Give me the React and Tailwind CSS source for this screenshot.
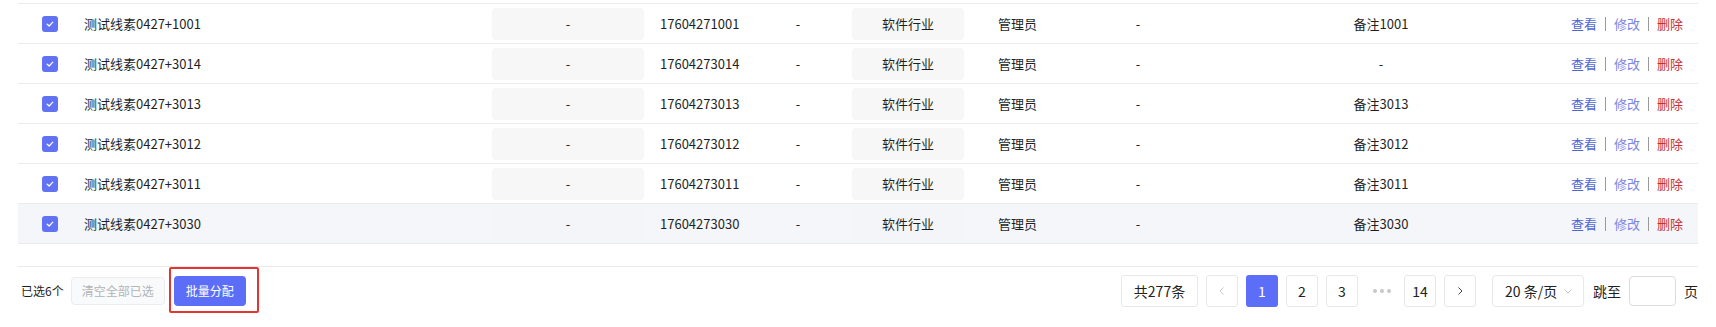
import React from "react";

const rows = [
  { name: "测试线素0427+1001", phone: "17604271001", note: "备注1001" },
  { name: "测试线素0427+3014", phone: "17604273014", note: "-" },
  { name: "测试线素0427+3013", phone: "17604273013", note: "备注3013" },
  { name: "测试线素0427+3012", phone: "17604273012", note: "备注3012" },
  { name: "测试线素0427+3011", phone: "17604273011", note: "备注3011" },
  { name: "测试线素0427+3030", phone: "17604273030", note: "备注3030", hl: true },
];

function Check() {
  return (
    <span className="flex h-[16px] w-[16px] items-center justify-center rounded-[3px] bg-[#6172f3]">
      <svg width="10" height="10" viewBox="0 0 10 10" fill="none">
        <path d="M2.2 5.2 L4.2 7 L7.8 3.2" stroke="#ffffff" strokeWidth="1.2" strokeLinecap="round" strokeLinejoin="round" />
      </svg>
    </span>
  );
}

function Row({ r }) {
  const bg = r.hl ? "bg-[#f5f6fa]" : "bg-white";
  const box = r.hl ? "bg-[#f4f5f8]" : "bg-[#f7f7f7]";
  return (
    <div className={`flex h-[40px] items-center border-b border-[#ebebeb] ${bg}`}>
      <div className="flex w-[66px] shrink-0 pl-[24px]">
        <Check />
      </div>
      <div className="w-[400px] shrink-0 text-[#1f1f1f]">{r.name}</div>
      <div className="w-[168px] shrink-0 px-2">
        <div className={`flex h-[32px] items-center justify-center rounded-[4px] ${box}`}>-</div>
      </div>
      <div className="w-[100px] shrink-0 pl-2">{r.phone}</div>
      <div className="w-[92px] shrink-0 text-center">-</div>
      <div className="w-[146px] shrink-0 pl-2">
        <div className={`flex h-[32px] w-[112px] items-center justify-center rounded-[4px] ${box}`}>软件行业</div>
      </div>
      <div className="w-[90px] shrink-0 pl-2">管理员</div>
      <div className="w-[116px] shrink-0 text-center">-</div>
      <div className="w-[370px] shrink-0 text-center">{r.note}</div>
      <div className="flex flex-1 items-center justify-end pr-[15px]">
        <span className="text-[#4f66d2]">查看</span>
        <span className="mx-2 h-[14px] w-px bg-[#9a9a9a]" />
        <span className="text-[#7b84e4]">修改</span>
        <span className="mx-2 h-[14px] w-px bg-[#9a9a9a]" />
        <span className="text-[#c62f38]">删除</span>
      </div>
    </div>
  );
}

function PageBox({ children, active, className = "" }) {
  return (
    <div
      className={`flex h-[32px] w-[32px] items-center justify-center rounded-[3px] ${
        active ? "bg-[#5c6ef8] text-white" : "border border-[#e8e8e8] bg-white text-[#222]"
      } ${className}`}
    >
      {children}
    </div>
  );
}

export default function App() {
  return (
    <div
      className="h-[327px] w-[1716px] overflow-hidden bg-white text-[13px] text-[#1f1f1f]"
      style={{ fontFamily: '"Noto Sans CJK SC", "Noto Sans", sans-serif' }}
    >
      <div className="mx-[18px] mt-[3px] border-t border-[#ebebeb]">
        {rows.map((r, i) => (
          <Row key={i} r={r} />
        ))}
      </div>
      <div className="mx-[18px] mt-[22px] flex items-center justify-between border-t border-[#ebebeb] pt-[8px]">
        <div className="flex h-[32px] items-center pl-[3px] text-[12px]">
          <span>已选6个</span>
          <div className="ml-[7px] flex h-[28px] w-[94px] items-center justify-center rounded-[4px] border border-[#ececec] bg-[#f9fafb] text-[#b4b4b4]">
            清空全部已选
          </div>
          <div className="relative ml-[9px]">
            <div className="flex h-[30px] w-[72px] items-center justify-center rounded-[4px] bg-[#5c6ef8] text-white">
              批量分配
            </div>
            <span className="pointer-events-none absolute -bottom-[7px] -left-[5px] -right-[13px] -top-[9px] rounded-[2px] border-2 border-[#e53531]" />
          </div>
        </div>
        <div className="flex h-[32px] items-center text-[14px]">
          <div className="flex h-[32px] w-[77px] items-center justify-center rounded-[3px] border border-[#e8e8e8] text-[#222]">
            共277条
          </div>
          <PageBox className="ml-2">
            <svg width="10" height="10" viewBox="0 0 10 10" fill="none">
              <path d="M6.5 1.5 L3 5 L6.5 8.5" stroke="#c4c4c4" strokeWidth="1" />
            </svg>
          </PageBox>
          <PageBox active className="ml-2">1</PageBox>
          <PageBox className="ml-2">2</PageBox>
          <PageBox className="ml-2">3</PageBox>
          <div className="ml-2 flex h-[32px] w-[32px] items-center justify-center gap-[3px]">
            <span className="h-[4px] w-[4px] rounded-full bg-[#c8c8c8]" />
            <span className="h-[4px] w-[4px] rounded-full bg-[#c8c8c8]" />
            <span className="h-[4px] w-[4px] rounded-full bg-[#c8c8c8]" />
          </div>
          <PageBox className="ml-[6px]">14</PageBox>
          <PageBox className="ml-2">
            <svg width="10" height="10" viewBox="0 0 10 10" fill="none">
              <path d="M3.5 1.5 L7 5 L3.5 8.5" stroke="#444" strokeWidth="1" />
            </svg>
          </PageBox>
          <div className="ml-4 flex h-[32px] w-[92px] items-center justify-between rounded-[4px] border border-[#e8e8e8] pl-[12px] pr-[10px] text-[#222]">
            <span>20 条/页</span>
            <svg width="10" height="10" viewBox="0 0 10 10" fill="none">
              <path d="M1.5 3.5 L5 7 L8.5 3.5" stroke="#c4c4c4" strokeWidth="1" />
            </svg>
          </div>
          <span className="ml-[9px]">跳至</span>
          <div className="ml-[8px] h-[30px] w-[47px] rounded-[4px] border border-[#dcdcdc] bg-white" />
          <span className="ml-[8px]">页</span>
        </div>
      </div>
    </div>
  );
}
